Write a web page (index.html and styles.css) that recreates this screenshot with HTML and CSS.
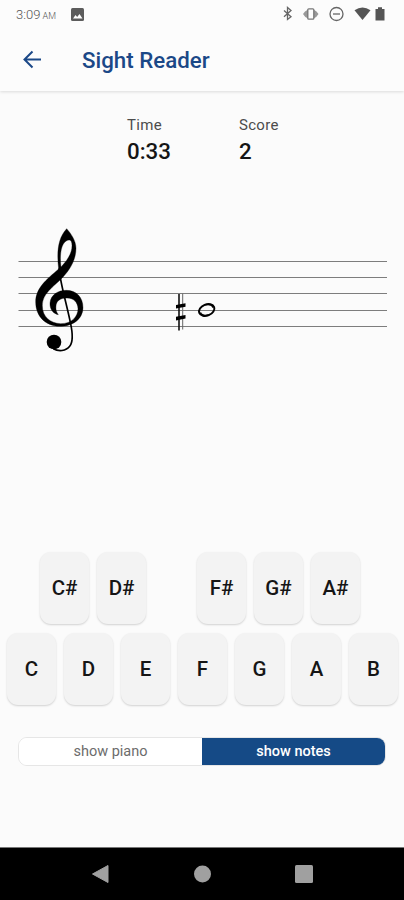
FILE: index.html
```html
<!DOCTYPE html>
<html lang="en">
<head>
    <meta charset="UTF-8">
    <meta name="viewport" content="width=device-width, initial-scale=1.0">
    <title>Sight Reader</title>
    <link rel="stylesheet" href="styles.css">
</head>
<body>
    <div class="app">
        <header class="header">
            <div class="status-bar">
                <span class="clock">3:09 <small>AM</small></span>
                <svg class="picture-icon" width="13" height="13" viewBox="0 0 13 13">
                    <rect width="13" height="13" rx="1.5" fill="#5c5c5c"/>
                    <path d="M2 10.5L4.5 7l1.7 2L8.5 6l3 4.5z" fill="#fff"/>
                </svg>
                <svg class="status-icons" width="106" height="16" viewBox="0 0 106 16" fill="none" stroke="#666" stroke-width="1.3">
                    <path d="M1 4.500l7 6.200L4.500 13.500v-12L8 4.500l-7 6.300"/>
                    <path d="M25 3.500Q21.500 5 20 8q1.500 3 5 4.500zM30.500 3.500Q34 5 35.500 8q-1.500 3-5 4.500z" fill="#999" stroke="none"/>
                    <rect x="24.800" y="2.800" width="6" height="10.400" rx="1" fill="#fcfcfc" stroke="#777"/>
                    <circle cx="53.500" cy="8" r="6.500"/>
                    <path d="M50 8h7"/>
                    <path d="M71.500 4.300q8-5.400 16 0L79.500 14z" fill="#555" stroke="none"/>
                    <path d="M92.500 3H95V1.300h4V3h2.500v11.500h-9z" fill="#555" stroke="none"/>
                </svg>
            </div>
            <div class="title-bar">
                <svg width="20" height="20" viewBox="0 0 20 20" fill="none" stroke="#1b4887" stroke-width="2">
                    <path d="M19 9.500H3M10.500 1.500L2.500 9.500l8 8"/>
                </svg>
                <h1>Sight Reader</h1>
            </div>
        </header>

        <section class="stats">
            <div class="stat">
                <div class="stat-label">Time</div>
                <div class="stat-value">0:33</div>
            </div>
            <div class="stat">
                <div class="stat-label">Score</div>
                <div class="stat-value">2</div>
            </div>
        </section>

        <svg class="staff" width="404" height="140" viewBox="0 0 404 140">
            <path d="M18.500 41.500H387M18.500 57.500H387M18.500 73.500H387M18.500 90.500H387M18.500 106.500H387" stroke="#7d7d7d" stroke-width="1"/>
            <!-- treble clef -->
            <g transform="translate(10 0) scale(.33333)">
                <path fill-rule="evenodd" stroke="#000" stroke-width="1" d="M170 26C183 41 198 62 198 85C198 116 183 145 160 170C128 203 97 220 97 257C97 290 121 310 152 311C186 311 204 289 204 266C203 246 190 234 171 234C150 234 139 243 138 258C137 269 139 276 145 284C127 280 119 265 120 249C122 225 143 211 169 211C199 211 219 232 219 263C219 296 190 319 149 319C106 318 77 289 77 246C77 204 109 179 146 147C140 98 143 55 170 26ZM178 60C158 61 147 91 153 141C172 121 186 100 186 77C186 67 184 61 178 60Z"/>
                <path d="M147 145C151 191 169 248 181 307C188 338 191 364 179 379C168 394 145 395 130 386" fill="none" stroke="#000" stroke-width="5"/>
                <circle cx="132" cy="366" r="22"/>
            </g>
            <!-- sharp -->
            <path d="M179 74v36.500" stroke="#111" stroke-width="1.600"/>
            <path d="M182.700 73.500v36" stroke="#666" stroke-width="1"/>
            <path d="M176 85l9.500-1.800v3.600l-9.500 1.800zM176 96.800l9.500-1.800v3.600l-9.500 1.800z"/>
            <!-- half note head -->
            <ellipse cx="206.700" cy="90" rx="8" ry="5.600" transform="rotate(-22 206.700 90)" fill="none" stroke="#000" stroke-width="2"/>
            <path d="M199.500 93.500C201 97 207 96.500 211 93.500C207 95 202 95.500 201 92zM213.900 86.500C212.400 83 206.400 83.500 202.400 86.500C206.400 85 211.400 84.500 212.400 88z"/>
        </svg>

        <section class="keys">
            <div class="key-row sharps">
                <button class="key">C#</button>
                <button class="key">D#</button>
                <span class="key-gap"></span>
                <button class="key">F#</button>
                <button class="key">G#</button>
                <button class="key">A#</button>
            </div>
            <div class="key-row">
                <button class="key">C</button>
                <button class="key">D</button>
                <button class="key">E</button>
                <button class="key">F</button>
                <button class="key">G</button>
                <button class="key">A</button>
                <button class="key">B</button>
            </div>
        </section>

        <div class="toggle">
            <button class="toggle-option">show piano</button>
            <button class="toggle-option selected">show notes</button>
        </div>

        <nav class="nav-bar">
            <svg width="20" height="20" viewBox="0 0 20 20"><path d="M18 1.500v17L2.500 10z" fill="#a0a0a0" stroke="#a0a0a0" stroke-linejoin="round"/></svg>
            <svg width="20" height="20" viewBox="0 0 20 20"><circle cx="10.500" cy="10" r="8.500" fill="#a0a0a0"/></svg>
            <svg width="20" height="20" viewBox="0 0 20 20"><rect x="1" y="1" width="18" height="18" rx="1.500" fill="#a0a0a0"/></svg>
        </nav>
    </div>
</body>
</html>
```
FILE: styles.css
```css
* {
    box-sizing: border-box;
}
body {
    margin: 0;
    font-family: Roboto, sans-serif;
    background: #fbfbfb;
    color: #151515;
}
button {
    font-family: inherit;
    border: none;
    padding: 0;
}
.app {
    width: 404px;
    height: 900px;
    display: flex;
    flex-direction: column;
    overflow: hidden;
}
.header {
    height: 91px;
    background: #fcfcfc;
    box-shadow: 0 1px 3px rgba(0, 0, 0, 0.13);
}
.status-bar {
    display: flex;
    align-items: center;
    height: 28px;
    padding: 0 16px;
}
.clock {
    width: 55px;
    font-size: 13px;
    font-weight: 300;
    color: #555;
    white-space: nowrap;
}
.clock small {
    font-size: 9px;
    margin-left: -1px;
}
.status-icons {
    margin-left: auto;
    margin-right: -1px;
}
.title-bar {
    display: flex;
    align-items: center;
    height: 63px;
    padding: 0 0 0 22px;
    gap: 40px;
}
.title-bar h1 {
    margin: 0;
    font-size: 22.3px;
    font-weight: 500;
    color: #1b4887;
}
.stats {
    display: flex;
    padding: 24px 0 0 127px;
    height: 129px;
}
.stat {
    width: 112px;
}
.stat-label {
    font-size: 15px;
    line-height: 20px;
    letter-spacing: 0.3px;
    color: #4c4c4c;
}
.stat-value {
    font-size: 22.3px;
    line-height: 33px;
    font-weight: 500;
}
.staff {
    display: block;
    flex-shrink: 0;
}
.keys {
    margin-top: 192px;
    display: flex;
    flex-direction: column;
    gap: 9px;
}
.key-row {
    display: flex;
    gap: 8px;
    padding-left: 7px;
}
.key-row.sharps {
    padding-left: 40px;
}
.key {
    width: 49px;
    height: 72px;
    border-radius: 11px;
    background: #f3f3f3;
    color: #151515;
    font-size: 20.5px;
    font-weight: 500;
    box-shadow: 0 1px 2px rgba(0, 0, 0, 0.17);
}
.key-gap {
    width: 35px;
}
.toggle {
    display: flex;
    margin: 32px 18px 0;
    height: 29px;
    border: 1px solid #e6e6e6;
    border-radius: 9px;
    overflow: hidden;
}
.toggle-option {
    flex: 1;
    background: #fff;
    color: #6c6c6c;
    font-size: 14.5px;
}
.toggle-option.selected {
    background: #154a86;
    color: #fff;
    font-weight: 500;
}
.nav-bar {
    margin-top: auto;
    height: 53px;
    display: flex;
    justify-content: space-between;
    align-items: center;
    padding: 0 90px;
    background: #000;
    border-top: 1px solid #777;
}
```
